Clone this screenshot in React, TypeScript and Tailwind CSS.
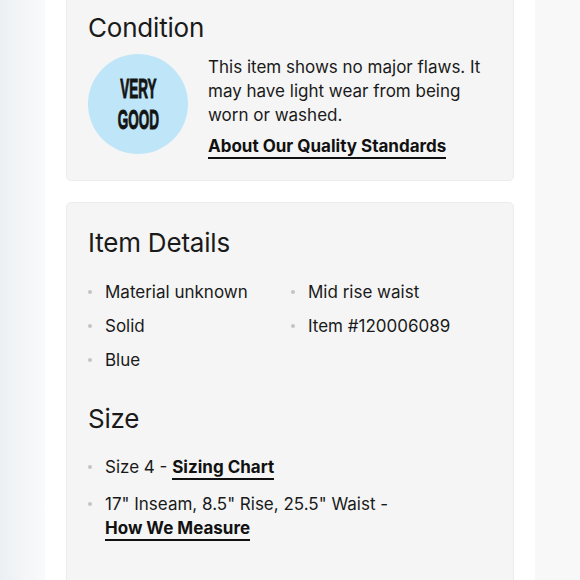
const font = { fontFamily: "Inter, 'Noto Sans', sans-serif" };

function Dot() {
  return <span className="mt-[10px] h-[4px] w-[4px] shrink-0 rounded-full bg-[#c4c4c4]" />;
}

function Bullet({ children }: { children: React.ReactNode }) {
  return (
    <li className="flex gap-[13px]">
      <Dot />
      <div>{children}</div>
    </li>
  );
}

function TextLink({ children }: { children: React.ReactNode }) {
  return (
    <span className="border-b-2 border-[#111] pb-[1px] font-bold text-[#111]">{children}</span>
  );
}

const badgeWord =
  "block scale-x-[0.5] text-center text-[27px] font-bold leading-[31px] text-[#141414] [-webkit-text-stroke:1px_#141414]";

export default function App() {
  return (
    <div className="flex h-[580px] w-[580px] overflow-hidden bg-white text-[#1a1a1a]" style={font}>
      <div className="w-[45px] shrink-0 bg-gradient-to-r from-[#edf0f3] to-[#f9fafb]" />

      <main className="flex w-[490px] shrink-0 flex-col gap-[21px] bg-white px-[21px]">
        {/* condition */}
        <section className="-mt-[20px] rounded-[5px] border border-[#ececec] bg-[#f5f5f5] px-[21px] pb-[22px] pt-[31px]">
          <h2 className="text-[26px] font-normal leading-[32px] tracking-[-0.2px]">Condition</h2>
          <div className="mt-[10px] flex gap-[20px]">
            <div
              className="flex h-[100px] w-[100px] shrink-0 flex-col items-center justify-center rounded-full bg-[#bfe5f8] pt-[2px]"
              style={{ fontFamily: "'Liberation Sans', Arial, sans-serif" }}
            >
              <span className={badgeWord}>VERY</span>
              <span className={badgeWord}>GOOD</span>
            </div>
            <div className="pt-[1px] text-[17px] leading-[24px]">
              <p>
                This item shows no major flaws. It
                <br />
                may have light wear from being
                <br />
                worn or washed.
              </p>
              <p className="mt-[7px]">
                <TextLink>About Our Quality Standards</TextLink>
              </p>
            </div>
          </div>
        </section>

        {/* details */}
        <section className="-mb-[30px] flex-1 rounded-[5px] border border-[#ececec] bg-[#f5f5f5] px-[21px] pt-[24px]">
          <h2 className="text-[26px] font-normal leading-[32px] tracking-[-0.2px]">Item Details</h2>
          <div className="mt-[21px] grid grid-cols-[203px_1fr] text-[17px] leading-[24px]">
            <ul className="flex flex-col gap-[10px]">
              <Bullet>Material unknown</Bullet>
              <Bullet>Solid</Bullet>
              <Bullet>Blue</Bullet>
            </ul>
            <ul className="flex flex-col gap-[10px]">
              <Bullet>Mid rise waist</Bullet>
              <Bullet>Item #120006089</Bullet>
            </ul>
          </div>

          <h2 className="mt-[31px] text-[26px] font-normal leading-[32px] tracking-[-0.2px]">Size</h2>
          <ul className="mt-[20px] flex flex-col gap-[13px] text-[17px] leading-[24px]">
            <Bullet>
              Size 4 - <TextLink>Sizing Chart</TextLink>
            </Bullet>
            <Bullet>
              17" Inseam, 8.5" Rise, 25.5" Waist -
              <br />
              <TextLink>How We Measure</TextLink>
            </Bullet>
          </ul>
        </section>
      </main>

      <div className="w-[45px] shrink-0 bg-[#f8f8f8]" />
    </div>
  );
}
